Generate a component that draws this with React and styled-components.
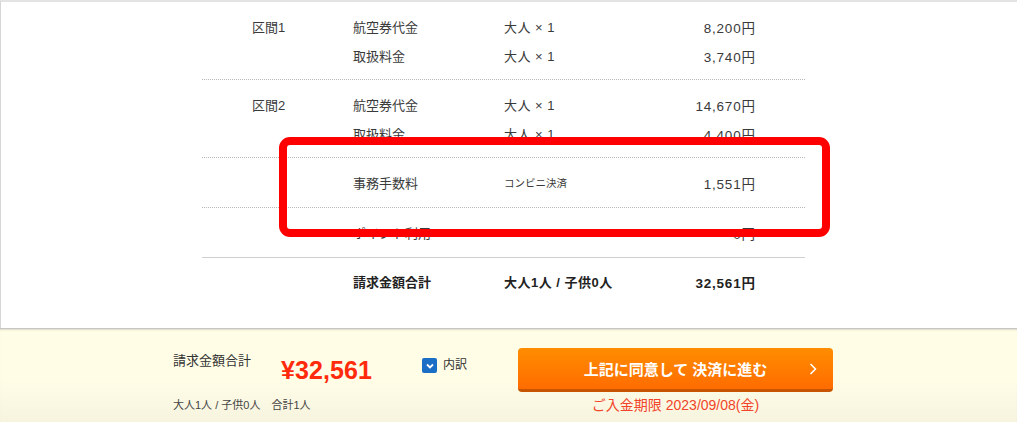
import styled, { createGlobalStyle } from 'styled-components';

const GlobalStyle = createGlobalStyle`
  body {
    margin: 0;
    background: #fff;
    color: #333;
    font-family: "Liberation Sans", "Noto Sans CJK JP", sans-serif;
  }
`;

const Page = styled.div`
  height: 422px;
  display: flex;
  flex-direction: column;
  overflow: hidden;
`;

const Main = styled.div`
  flex: 1;
  position: relative;
  border-top: 2px solid #e3e3e3;
  border-left: 1px solid #d6d6d6;
`;

const Table = styled.div`
  width: 603px;
  margin-left: 201px;
`;

const Section = styled.div`
  padding: ${(p) => (p.total ? '9px 0' : p.single ? '10px 0' : '10px 0 9px')};
  border-bottom: ${(p) => (p.last ? 'none' : '1px dotted #b8b8b8')};
  border-top: ${(p) => (p.total ? '1px solid #cfcfcf' : 'none')};
`;

const Row = styled.div`
  display: grid;
  grid-template-columns: 101px 151px 1fr auto;
  align-items: center;
  height: 29px;
  padding: 0 50px;
  font-size: 13px;
  font-weight: ${(p) => (p.bold ? 700 : 400)};
  color: ${(p) => (p.bold ? '#222' : '#3a3a3a')};
`;

const Cell = styled.span`
  white-space: nowrap;
  font-size: ${(p) => (p.small ? '10.5px' : 'inherit')};
  letter-spacing: ${(p) => (p.wide ? '0.5px' : '0')};
`;

const Amount = styled.span`
  text-align: right;
  white-space: nowrap;
  font-size: 13.5px;
  letter-spacing: 0.8px;
  margin-right: -0.8px;
`;

const Highlight = styled.div`
  position: absolute;
  left: 278px;
  top: 135px;
  width: 551px;
  height: 100px;
  box-sizing: border-box;
  border: 8px solid #ff0000;
  border-radius: 11px;
  pointer-events: none;
`;

const Footer = styled.div`
  height: 93px;
  flex: none;
  display: flex;
  padding-left: 173px;
  border-top: 1px solid #c6c6c6;
  box-shadow: inset 0 2px 2px -1px rgba(0, 0, 0, 0.14);
  background: linear-gradient(to bottom, #fffde6 55%, #f6f4df 100%);
`;

const Summary = styled.div`
  width: 249px;
  padding-top: 23px;
  display: flex;
  flex-direction: column;
`;

const TopLine = styled.div`
  display: flex;
  align-items: flex-start;
`;

const SummaryLabel = styled.span`
  font-size: 13px;
  line-height: 18px;
  color: #333;
`;

const Price = styled.span`
  margin-left: 30px;
  margin-top: 3px;
  font-size: 25px;
  line-height: 30px;
  font-weight: 700;
  color: #ff2b0c;
  letter-spacing: 0.1px;
`;

const Counts = styled.div`
  margin-top: 13px;
  font-size: 11px;
  line-height: 14px;
  color: #444;
`;

const Breakdown = styled.label`
  width: 96px;
  padding-top: 29px;
  display: flex;
  align-items: flex-start;
  gap: 6px;
  font-size: 12px;
  line-height: 15px;
  color: #333;
`;

const Check = styled.span`
  width: 15px;
  height: 15px;
  border-radius: 2px;
  background: #1b6ec6;
  display: flex;
  align-items: center;
  justify-content: center;
`;

const Action = styled.div`
  padding-top: 19px;
  width: 315px;
  display: flex;
  flex-direction: column;
  align-items: center;
`;

const Button = styled.button`
  width: 315px;
  height: 44px;
  border: none;
  border-bottom: 3px solid #c75400;
  border-radius: 4px;
  background: linear-gradient(to bottom, #ff8d00, #ff6c00);
  color: #fff;
  font-family: inherit;
  font-size: 15px;
  font-weight: 700;
  display: flex;
  align-items: center;
  justify-content: center;
  position: relative;
  cursor: pointer;
  padding: 0;
`;

const Arrow = styled.svg`
  position: absolute;
  right: 16px;
  top: 50%;
  margin-top: -6px;
`;

const Deadline = styled.div`
  margin-top: 5px;
  font-size: 14px;
  line-height: 16px;
  color: #f2442a;
`;

const sections = [
  {
    rows: [
      ['区間1', '航空券代金', '大人 × 1', '8,200円'],
      ['', '取扱料金', '大人 × 1', '3,740円'],
    ],
  },
  {
    rows: [
      ['区間2', '航空券代金', '大人 × 1', '14,670円'],
      ['', '取扱料金', '大人 × 1', '4,400円'],
    ],
  },
  { rows: [['', '事務手数料', 'コンビニ決済', '1,551円']], small: true },
  { rows: [['', 'ポイント利用', '', '0円']], last: true },
];

const App = () => {
  return (
    <Page>
      <GlobalStyle />
      <Main>
        <Table>
          {sections.map((s, i) => (
            <Section key={i} last={s.last} single={s.rows.length === 1}>
              {s.rows.map((r, j) => (
                <Row key={j}>
                  <Cell>{r[0]}</Cell>
                  <Cell>{r[1]}</Cell>
                  <Cell small={s.small} wide={!s.small}>{r[2]}</Cell>
                  <Amount>{r[3]}</Amount>
                </Row>
              ))}
            </Section>
          ))}
          <Section total last>
            <Row bold>
              <Cell />
              <Cell>請求金額合計</Cell>
              <Cell wide>大人1人 / 子供0人</Cell>
              <Amount>32,561円</Amount>
            </Row>
          </Section>
        </Table>
        <Highlight />
      </Main>
      <Footer>
        <Summary>
          <TopLine>
            <SummaryLabel>請求金額合計</SummaryLabel>
            <Price>¥32,561</Price>
          </TopLine>
          <Counts>大人1人 / 子供0人　合計1人</Counts>
        </Summary>
        <Breakdown>
          <Check>
            <svg width="10" height="10" viewBox="0 0 10 10">
              <polyline points="2,3.5 5,6.5 8,3.5" fill="none" stroke="#fff" strokeWidth="1.8" />
            </svg>
          </Check>
          <span>内訳</span>
        </Breakdown>
        <Action>
          <Button>
            上記に同意して 決済に進む
            <Arrow width="8" height="12" viewBox="0 0 8 12">
              <polyline points="1.5,1 6.5,6 1.5,11" fill="none" stroke="#fff" strokeWidth="1.6" />
            </Arrow>
          </Button>
          <Deadline>ご入金期限 2023/09/08(金)</Deadline>
        </Action>
      </Footer>
    </Page>
  );
};

export default App;
